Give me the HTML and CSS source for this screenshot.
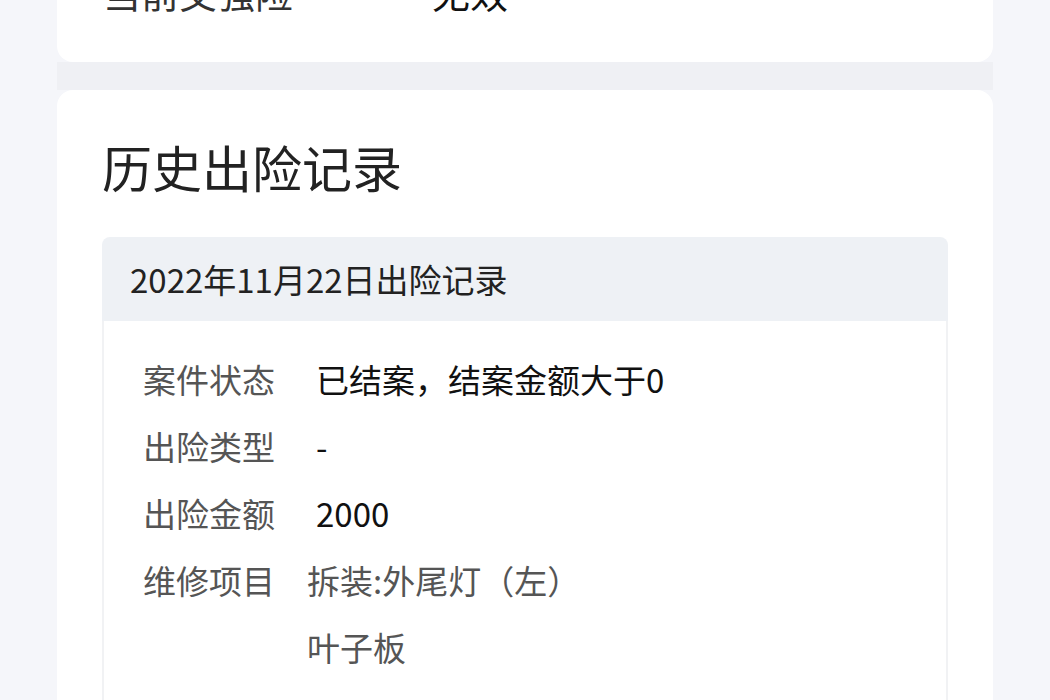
FILE: index.html
```html
<!DOCTYPE html>
<html>
<head>
    <title>出险记录</title>
    <meta charset="utf-8" />

    <link rel="stylesheet" href="styles.css">

</head>
<body>

    <div class="page">

        <div class="card card_top">
            <div class="info_row">
                <span class="info_label">当前交强险</span>
                <span class="info_value">无效</span>
            </div>
        </div>

        <div class="divider"></div>

        <div class="card card_history">
            <h2 class="card_title">历史出险记录</h2>

            <div class="record">
                <div class="record_head">2022年11月22日出险记录</div>
                <div class="record_body">
                    <div class="row">
                        <span class="label">案件状态</span>
                        <span class="value">已结案，结案金额大于0</span>
                    </div>
                    <div class="row">
                        <span class="label">出险类型</span>
                        <span class="value">-</span>
                    </div>
                    <div class="row">
                        <span class="label">出险金额</span>
                        <span class="value">2000</span>
                    </div>
                    <div class="row">
                        <span class="label">维修项目</span>
                        <div class="items">
                            <div>拆装:外尾灯（左）</div>
                            <div>叶子板</div>
                        </div>
                    </div>
                </div>
            </div>
        </div>

    </div>

</body>
</html>
```

FILE: styles.css
```css
body {
    margin: 0;
    background: #f5f6fa;
    font-family: "Noto Sans CJK SC", "Noto Sans", sans-serif;
    color: #222;
}

.page {
    width: 936px;
    margin: 0 auto;
}

.card {
    background: #fff;
}

.card_top {
    margin-top: -60px;
    padding: 26px 46px 44px;
    border-radius: 0 0 16px 16px;
}

.info_row {
    display: flex;
    font-size: 38px;
    line-height: 52px;
}

.info_label {
    width: 329px;
    color: #333;
}

.info_value {
    color: #111;
}

.divider {
    height: 28px;
    background: #eff0f4;
}

.card_history {
    padding: 46px 45px 80px;
    border-radius: 16px 16px 0 0;
}

.card_title {
    margin: 0;
    font-size: 50px;
    line-height: 60px;
    font-weight: normal;
    color: #222;
}

.record {
    margin-top: 41px;
}

.record_head {
    height: 84px;
    padding-left: 28px;
    font-size: 33px;
    line-height: 84px;
    background: #eef1f5;
    border-radius: 8px 8px 0 0;
    color: #222;
}

.record_body {
    padding: 25px 0 80px 39px;
    border: 2px solid #f1f2f4;
    border-top: 0;
}

.row {
    display: flex;
    font-size: 33px;
    line-height: 67px;
}

.label {
    width: 164px;
    flex-shrink: 0;
    color: #555;
}

.value {
    padding-left: 9px;
    color: #111;
}

.items {
    color: #555;
}
```
